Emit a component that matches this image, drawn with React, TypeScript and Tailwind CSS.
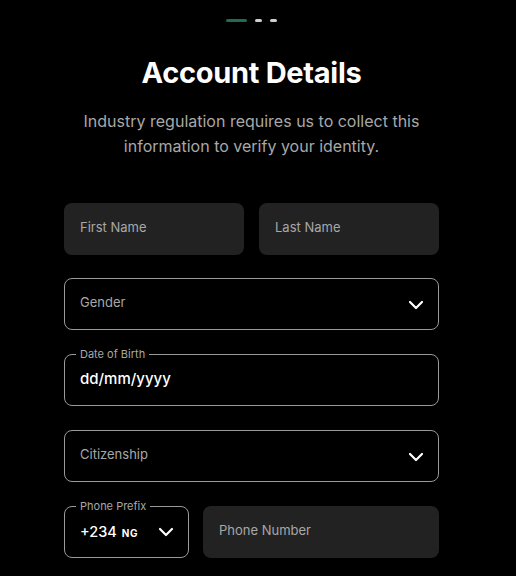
import { ChevronDown } from 'lucide-react';

function FilledInput({ label, className = '' }: { label: string; className?: string }) {
  return (
    <div className={`h-[52px] rounded-[8px] bg-[#222222] flex items-center px-4 pb-[3px] ${className}`}>
      <span className="text-[13px] text-[#a8a8a8]">{label}</span>
    </div>
  );
}

function SelectBox({ label }: { label: string }) {
  return (
    <div className="h-[52px] rounded-[8px] border border-[#9a9a9a] flex items-center justify-between pl-[15px] pr-[10px]">
      <span className="text-[13px] text-[#a8a8a8] pb-[3px]">{label}</span>
      <ChevronDown size={24} strokeWidth={2.2} className="text-white mt-[2px]" />
    </div>
  );
}

function NotchedBox({ label, children, className = '' }: { label: string; children: React.ReactNode; className?: string }) {
  return (
    <div className={`relative h-[52px] rounded-[8px] border border-[#9a9a9a] flex items-center pl-[15px] ${className}`}>
      <span className="absolute -top-[8px] left-[11px] px-1 bg-black text-[11px] leading-[14px] text-[#a8a8a8]">{label}</span>
      {children}
    </div>
  );
}

export default function App() {
  return (
    <div className="min-h-[576px] bg-black text-white flex flex-col items-center pr-[13px]" style={{ fontFamily: 'Inter, "Noto Sans", sans-serif' }}>
      {/* step indicator */}
      <div className="flex items-center gap-2 mt-[19px]">
        <div className="w-[21px] h-[3px] rounded-full bg-[#1f6b55]" />
        <div className="w-[7px] h-[3px] rounded-full bg-[#cfcfcf]" />
        <div className="w-[7px] h-[3px] rounded-full bg-[#cfcfcf]" />
      </div>

      <h1 className="mt-[33px] text-[29px] leading-[36px] font-bold tracking-[-0.3px]">Account Details</h1>

      <p className="mt-[18px] w-[380px] text-center text-[16px] leading-[25px] text-[#a8a8a8]">
        Industry regulation requires us to collect this information to verify your identity.
      </p>

      <div className="mt-[44px] w-[375px] flex flex-col">
        <div className="flex gap-[15px]">
          <FilledInput label="First Name" className="flex-1" />
          <FilledInput label="Last Name" className="flex-1" />
        </div>

        <div className="mt-[23px]">
          <SelectBox label="Gender" />
        </div>

        <div className="mt-[24px]">
          <NotchedBox label="Date of Birth">
            <span className="text-[15px] font-medium text-white pb-[2px]">dd/mm/yyyy</span>
          </NotchedBox>
        </div>

        <div className="mt-[24px]">
          <SelectBox label="Citizenship" />
        </div>

        <div className="mt-[24px] flex gap-[14px]">
          <NotchedBox label="Phone Prefix" className="w-[125px] justify-between pr-[10px]">
            <span className="flex items-baseline gap-[5px] pb-[1px]">
              <span className="text-[14.5px] font-medium text-white">+234</span>
              <span className="text-[10px] font-bold tracking-[0.5px] text-white">NG</span>
            </span>
            <ChevronDown size={24} strokeWidth={2.2} className="text-white" />
          </NotchedBox>
          <FilledInput label="Phone Number" className="flex-1" />
        </div>
      </div>
    </div>
  );
}
